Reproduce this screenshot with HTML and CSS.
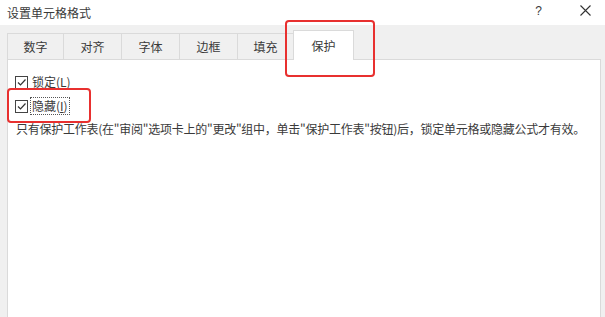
FILE: index.html
```html
<!DOCTYPE html>
<html lang="zh-CN">
<head>
<meta charset="utf-8">
<title>设置单元格格式</title>
<link rel="stylesheet" href="styles.css">
</head>
<body>
<div class="dialog">
  <div class="titlebar">
    <span class="title">设置单元格格式</span>
    <div class="title-btns">
      <span class="help">?</span>
      <span class="close">
        <svg width="11" height="11" viewBox="0 0 11 11"><path d="M0.5 0.5 L10.5 10.5 M10.5 0.5 L0.5 10.5" stroke="#333" stroke-width="1.1" fill="none"/></svg>
      </span>
    </div>
  </div>
  <div class="body">
    <div class="tabs">
      <div class="tab">数字</div>
      <div class="tab">对齐</div>
      <div class="tab">字体</div>
      <div class="tab">边框</div>
      <div class="tab">填充</div>
      <div class="tab active">保护</div>
    </div>
    <div class="panel">
      <label class="check-row">
        <span class="box"><svg width="11" height="11" viewBox="0 0 11 11"><path d="M2 5.5 L4.5 8 L9.5 2.5" stroke="#333" stroke-width="1.2" fill="none"/></svg></span>
        <span class="label">锁定(<u>L</u>)</span>
      </label>
      <label class="check-row second">
        <span class="box"><svg width="11" height="11" viewBox="0 0 11 11"><path d="M2 5.5 L4.5 8 L9.5 2.5" stroke="#333" stroke-width="1.2" fill="none"/></svg></span>
        <span class="label focus">隐藏(<u>I</u>)</span>
      </label>
      <p class="desc">只有保护工作表(在"审阅"选项卡上的"更改"组中，单击"保护工作表"按钮)后，锁定单元格或隐藏公式才有效。</p>
    </div>
  </div>
  <div class="mark mark-tab"></div>
  <div class="mark mark-check"></div>
</div>
</body>
</html>
```
FILE: styles.css
```css
html, body {
  margin: 0;
  padding: 0;
}
body {
  width: 605px;
  height: 317px;
  overflow: hidden;
  font-family: "Noto Sans CJK SC", "Noto Sans", "Liberation Sans", sans-serif;
  font-size: 12px;
  color: #3a3a3a;
  background: #f0f0f0;
}
.dialog {
  position: relative;
  width: 605px;
  height: 317px;
  display: flex;
  flex-direction: column;
}
.titlebar {
  height: 25px;
  background: #fff;
  display: flex;
  align-items: center;
  justify-content: space-between;
  padding-left: 7px;
  box-sizing: border-box;
}
.title {
  font-size: 12px;
  line-height: 1;
  margin-top: 0;
}
.title-btns {
  display: flex;
  align-items: center;
  margin-top: -4px;
}
.help {
  font-family: "Liberation Sans", sans-serif;
  font-size: 12px;
  margin-right: 38px;
}
.close {
  display: flex;
  margin-right: 14px;
}
.body {
  flex: 1;
  display: flex;
  flex-direction: column;
  padding: 0 4px 0 7px;
  background: #f0f0f0;
}
.tabs {
  display: flex;
  height: 26px;
  margin-top: 8px;
  align-items: flex-end;
}
.tab {
  width: 57px;
  height: 26px;
  box-sizing: border-box;
  border: 1px solid #dadada;
  border-bottom: none;
  margin-right: -1px;
  display: flex;
  align-items: center;
  justify-content: center;
  background: #f0f0f0;
}
.tab:nth-child(2) { width: 59px; }
.tab:nth-child(3) { width: 59px; }
.tab:nth-child(4) { width: 59px; }
.tab.active {
  width: 61px;
  height: 30px;
  background: #fff;
  position: relative;
  z-index: 1;
  margin-bottom: -1px;
  padding-bottom: 1px;
}
.panel {
  flex: 1;
  background: #fff;
  border: 1px solid #dadada;
  border-bottom: none;
  padding: 15px 7px 0 7px;
}
.check-row {
  display: flex;
  align-items: center;
  height: 14px;
}
.check-row.second {
  margin-top: 10px;
}
.box {
  width: 13px;
  height: 13px;
  box-sizing: border-box;
  border: 1px solid #444;
  display: flex;
  align-items: center;
  justify-content: center;
  background: #fff;
}
.label {
  margin-left: 4px;
  line-height: 16px;
}
.label u {
  text-decoration: underline;
}
.label.focus {
  outline: 1px dotted #555;
  outline-offset: 0px;
  padding: 0 1px;
  margin-left: 3px;
}
.desc {
  margin: 8px 0 0 1px;
  line-height: 16px;
  white-space: nowrap;
  letter-spacing: -0.25px;
}
.mark {
  position: absolute;
  border: 2.5px solid #e8302f;
  border-radius: 4px;
  box-sizing: border-box;
}
.mark-tab {
  left: 285px;
  top: 20px;
  width: 90px;
  height: 57px;
}
.mark-check {
  left: 7px;
  top: 88px;
  width: 84px;
  height: 35px;
}
```
